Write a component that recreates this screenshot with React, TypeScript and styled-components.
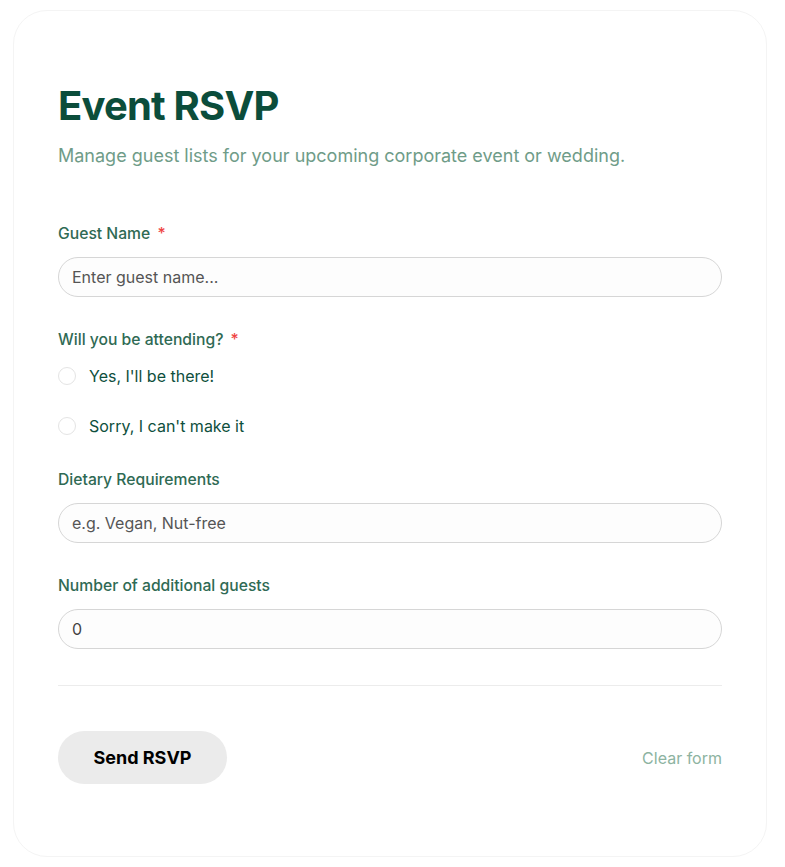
import { useState } from "react";
import styled, { createGlobalStyle } from "styled-components";

const GlobalStyle = createGlobalStyle`
  * {
    box-sizing: border-box;
  }
  body {
    margin: 0;
    background: #ffffff;
    font-family: Inter, "Noto Sans", sans-serif;
  }
`;

export default function App() {
  const [guestName, setGuestName] = useState<string>("");
  const [attending, setAttending] = useState<string>("");
  const [dietary, setDietary] = useState<string>("");
  const [extraGuests, setExtraGuests] = useState<string>("0");

  const onClickClear = () => {
    setGuestName("");
    setAttending("");
    setDietary("");
    setExtraGuests("0");
  };

  return (
    <Page>
      <GlobalStyle />
      <Card>
        <Header>
          <Title>Event RSVP</Title>
          <Subtitle>
            Manage guest lists for your upcoming corporate event or wedding.
          </Subtitle>
        </Header>
        <Form onSubmit={(event) => event.preventDefault()}>
          <Field>
            <Label>
              Guest Name <Required>*</Required>
            </Label>
            <TextInput
              type="text"
              placeholder="Enter guest name..."
              value={guestName}
              onChange={(event) => setGuestName(event.target.value)}
            />
          </Field>
          <Field>
            <Label>
              Will you be attending? <Required>*</Required>
            </Label>
            <RadioGroup>
              <RadioOption>
                <RadioInput
                  type="radio"
                  name="attending"
                  checked={attending === "yes"}
                  onChange={() => setAttending("yes")}
                />
                Yes, I'll be there!
              </RadioOption>
              <RadioOption>
                <RadioInput
                  type="radio"
                  name="attending"
                  checked={attending === "no"}
                  onChange={() => setAttending("no")}
                />
                Sorry, I can't make it
              </RadioOption>
            </RadioGroup>
          </Field>
          <Field>
            <Label>Dietary Requirements</Label>
            <TextInput
              type="text"
              placeholder="e.g. Vegan, Nut-free"
              value={dietary}
              onChange={(event) => setDietary(event.target.value)}
            />
          </Field>
          <Field>
            <Label>Number of additional guests</Label>
            <TextInput
              type="text"
              value={extraGuests}
              onChange={(event) => setExtraGuests(event.target.value)}
            />
          </Field>
          <Divider />
          <Actions>
            <SubmitButton type="submit">Send RSVP</SubmitButton>
            <ClearButton type="button" onClick={onClickClear}>
              Clear form
            </ClearButton>
          </Actions>
        </Form>
      </Card>
    </Page>
  );
}

const Page = styled.div`
  padding: 10px 18px 11px 13px;
`;

const Card = styled.div`
  width: 754px;
  padding: 71px 44px 72px;
  border: 1px solid #f4f4f4;
  border-radius: 34px;
  background: #ffffff;
`;

const Header = styled.div`
  display: flex;
  flex-direction: column;
  gap: 13px;
  margin-bottom: 56px;
`;

const Title = styled.h1`
  margin: 0;
  font-size: 40px;
  line-height: 48px;
  font-weight: 700;
  letter-spacing: -0.8px;
  color: #0b4d3b;
`;

const Subtitle = styled.p`
  margin: 0;
  font-size: 18px;
  line-height: 25px;
  color: #6f9c88;
`;

const Form = styled.form`
  display: flex;
  flex-direction: column;
  gap: 33px;
`;

const Field = styled.div`
  display: flex;
  flex-direction: column;
`;

const Label = styled.label`
  display: block;
  margin-bottom: 13px;
  font-size: 15.7px;
  line-height: 20px;
  font-weight: 500;
  color: #2f6a54;
`;

const Required = styled.span`
  margin-left: 3px;
  color: #ef4444;
`;

const TextInput = styled.input`
  width: 100%;
  height: 40px;
  padding: 0 13px;
  border: 1px solid #d6d6d6;
  border-radius: 999px;
  background: #fdfdfd;
  font-family: Inter, "Noto Sans", sans-serif;
  font-size: 16px;
  color: #444;
  outline: none;

  &::placeholder {
    color: #555;
  }
`;

const RadioGroup = styled.div`
  display: flex;
  flex-direction: column;
  gap: 28px;
  margin-top: 2px;
`;

const RadioOption = styled.label`
  display: flex;
  align-items: center;
  gap: 13px;
  height: 22px;
  font-size: 16px;
  color: #0e4f3d;
  cursor: pointer;
`;

const RadioInput = styled.input`
  appearance: none;
  width: 18px;
  height: 18px;
  margin: 0;
  border: 1px solid #e4e4e4;
  border-radius: 50%;
  background: #ffffff;

  &:checked {
    border: 5px solid #0b4d3b;
  }
`;

const Divider = styled.hr`
  margin: 3px 0 12px;
  border: none;
  border-top: 1px solid #ececec;
`;

const Actions = styled.div`
  display: flex;
  justify-content: space-between;
  align-items: center;
`;

const SubmitButton = styled.button`
  width: 169px;
  height: 53px;
  border: none;
  border-radius: 999px;
  background: #ebebeb;
  font-family: Inter, "Noto Sans", sans-serif;
  font-size: 18px;
  font-weight: 700;
  color: #000;
  cursor: pointer;
`;

const ClearButton = styled.button`
  padding: 0;
  border: none;
  background: none;
  font-family: Inter, "Noto Sans", sans-serif;
  font-size: 16px;
  color: #8db3a1;
  cursor: pointer;
`;
